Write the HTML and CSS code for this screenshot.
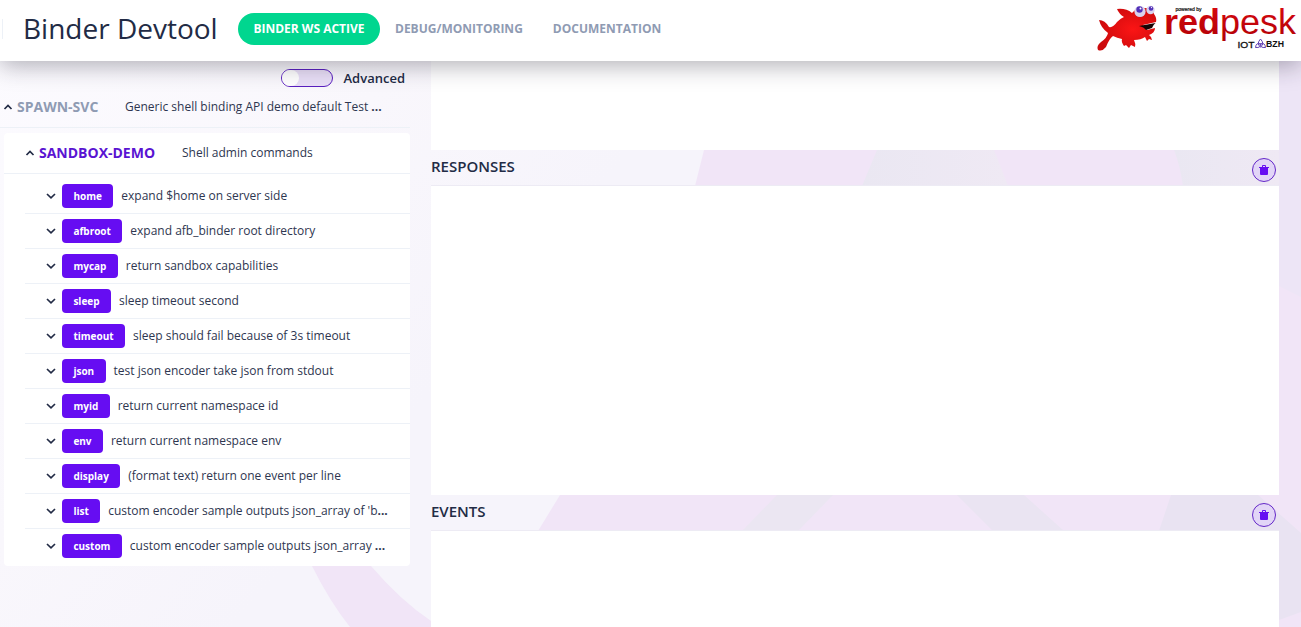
FILE: index.html
```html
<!DOCTYPE html>
<html lang="en">
<head>
<meta charset="utf-8">
<title>Binder Devtool</title>
<link rel="stylesheet" href="styles.css">
</head>
<body>
<svg class="backdrop" viewBox="0 0 1301 627" aria-hidden="true">
  <defs>
    <linearGradient id="base" x1="0" y1="0" x2="1" y2="0.4">
      <stop offset="0" stop-color="#fcfbff"/><stop offset=".3" stop-color="#f9f7fc"/><stop offset=".5" stop-color="#f6f4fb"/>
    </linearGradient>
    <linearGradient id="shade" x1="0" y1="0" x2="1" y2="0">
      <stop offset="0" stop-color="#eae7f2"/><stop offset="1" stop-color="#efe9f4"/>
    </linearGradient>
  </defs>
  <rect width="1301" height="627" fill="url(#base)"/>
  <path d="M740 0Q712 105 704 150L695 186Q650 350 560 495L538 531V627H1301V0Z" fill="#f1e5f7"/>
  <path d="M312 566H371Q400 600 431 621V627H350Q330 602 312 566Z" fill="#f1e5f7"/>
  <path d="M877 150H994Q1000 165 1008 186H862Z" fill="url(#shade)"/>
  <path d="M1174 150H1279V186H1183Q1180 165 1174 150Z" fill="url(#shade)"/>
  <path d="M1279 61H1301V297L1279 286Z" fill="#ede5f6"/>
  <path d="M777 495H833L798 531H742Z" fill="#ebe6f2"/>
  <path d="M957 495H1024L1064 531H993Z" fill="#eae4f2"/>
  <path d="M1171 495H1258L1301 533V612L1279 620V531H1159Z" fill="#e9e3f2"/>
</svg>

<header class="header">
  <span class="divider"></span>
  <h1 class="title">Binder Devtool</h1>
  <nav class="nav">
    <a class="nav-item active">BINDER WS ACTIVE</a>
    <a class="nav-item">DEBUG/MONITORING</a>
    <a class="nav-item">DOCUMENTATION</a>
  </nav>
  <svg class="logo" width="206" height="56" viewBox="1095 0 206 56">
    <defs>
      <linearGradient id="red" x1="0" y1="0" x2="0" y2="1"><stop offset="0" stop-color="#dc0a10"/><stop offset="1" stop-color="#b00006"/></linearGradient>
      <radialGradient id="fish" cx=".6" cy=".5" r=".6"><stop offset="0" stop-color="#fb1515"/><stop offset="1" stop-color="#cc0a0c"/></radialGradient>
    </defs>
    <path d="M1099 20Q1105 20 1109 27Q1113 28 1117 22Q1121 18 1124 17Q1119 14 1117 9Q1126 8 1132 13Q1136 8 1145 8Q1153 8 1154 14Q1157 18 1156 22L1143 25L1147 30L1155 28Q1155 33 1149 35Q1152 37 1152 40L1149 39L1147 41L1145 37Q1141 40 1134 40Q1136 44 1135 47L1131 45L1129 48L1126 45L1124 46Q1121 42 1122 39Q1117 38 1113 36Q1109 39 1106 47Q1102 52 1098 50Q1096 46 1101 42Q1107 38 1108 33Q1101 28 1099 20Z" fill="url(#fish)"/>
    <path d="M1139 26L1155.500 23Q1153 25 1152 28L1146 30Q1144 27 1139 26Z" fill="#180405"/>
    <circle cx="1140" cy="11.500" r="5.600" fill="#d9d2ed"/><circle cx="1150.500" cy="10" r="4.200" fill="#d9d2ed"/>
    <circle cx="1139.500" cy="9.500" r="3.200" fill="#5231b8"/><circle cx="1151" cy="8.500" r="2.300" fill="#5231b8"/>
    <circle cx="1140.500" cy="8.500" r="1" fill="#fff"/><circle cx="1151.500" cy="7.600" r=".7" fill="#fff"/>
    <text x="1175.500" y="11" class="logo-powered" textLength="26" lengthAdjust="spacingAndGlyphs">powered by</text>
    <text x="1164" y="34" class="logo-word" fill="url(#red)" textLength="132" lengthAdjust="spacingAndGlyphs"><tspan class="logo-bold">red</tspan>pesk</text>
    <text x="1237.500" y="48" class="logo-iot" textLength="17" lengthAdjust="spacingAndGlyphs">IOT</text>
    <text x="1266" y="47" class="logo-bzh" textLength="18" lengthAdjust="spacingAndGlyphs">BZH</text>
    <g fill="none" stroke="#6040b4" stroke-width="1"><path d="M1260.500 39Q1265 44 1260.500 47Q1256 44 1260.500 39ZM1255.500 47.500Q1256 42 1261 44Q1261 48 1255.500 47.500ZM1265.500 47.500Q1265 42 1260 44Q1260 48 1265.500 47.500Z"/></g>
  </svg>
</header>

<div class="page">
  <aside class="sidebar">
    <div class="advanced"><span class="toggle"><span class="knob"></span></span>Advanced</div>
    <div class="api"><svg class="chev" viewBox="0 0 10 6"><path d="M1.500 5L5 1.500L8.500 5"/></svg><b class="api-name">SPAWN-SVC</b><span class="desc">Generic shell binding API demo default Test <b>...</b></span></div>
    <section class="card">
      <div class="group"><svg class="chev" viewBox="0 0 10 6"><path d="M1.500 5L5 1.500L8.500 5"/></svg><b class="group-name">SANDBOX-DEMO</b><span class="desc">Shell admin commands</span></div>
      <ul class="verbs">
        <li class="verb"><svg class="chev" viewBox="0 0 10 6"><path d="M1 1L5 4.800L9 1"/></svg><span class="badge">home</span><span class="desc">expand $home on server side</span></li>
        <li class="verb"><svg class="chev" viewBox="0 0 10 6"><path d="M1 1L5 4.800L9 1"/></svg><span class="badge">afbroot</span><span class="desc">expand afb_binder root directory</span></li>
        <li class="verb"><svg class="chev" viewBox="0 0 10 6"><path d="M1 1L5 4.800L9 1"/></svg><span class="badge">mycap</span><span class="desc">return sandbox capabilities</span></li>
        <li class="verb"><svg class="chev" viewBox="0 0 10 6"><path d="M1 1L5 4.800L9 1"/></svg><span class="badge">sleep</span><span class="desc">sleep timeout second</span></li>
        <li class="verb"><svg class="chev" viewBox="0 0 10 6"><path d="M1 1L5 4.800L9 1"/></svg><span class="badge">timeout</span><span class="desc">sleep should fail because of 3s timeout</span></li>
        <li class="verb"><svg class="chev" viewBox="0 0 10 6"><path d="M1 1L5 4.800L9 1"/></svg><span class="badge">json</span><span class="desc">test json encoder take json from stdout</span></li>
        <li class="verb"><svg class="chev" viewBox="0 0 10 6"><path d="M1 1L5 4.800L9 1"/></svg><span class="badge">myid</span><span class="desc">return current namespace id</span></li>
        <li class="verb"><svg class="chev" viewBox="0 0 10 6"><path d="M1 1L5 4.800L9 1"/></svg><span class="badge">env</span><span class="desc">return current namespace env</span></li>
        <li class="verb"><svg class="chev" viewBox="0 0 10 6"><path d="M1 1L5 4.800L9 1"/></svg><span class="badge">display</span><span class="desc">(format text) return one event per line</span></li>
        <li class="verb"><svg class="chev" viewBox="0 0 10 6"><path d="M1 1L5 4.800L9 1"/></svg><span class="badge">list</span><span class="desc">custom encoder sample outputs json_array of 'b<b>...</b></span></li>
        <li class="verb"><svg class="chev" viewBox="0 0 10 6"><path d="M1 1L5 4.800L9 1"/></svg><span class="badge">custom</span><span class="desc">custom encoder sample outputs json_array <b>...</b></span></li>
      </ul>
    </section>
  </aside>
  <main class="main">
    <div class="panel panel-top"></div>
    <div class="panel-head">RESPONSES<button class="clear" aria-label="Clear responses"><svg width="10" height="10" viewBox="0 0 10 10"><path d="M3 2V1Q3 0 4 0H6Q7 0 7 1V2H10V3H9V9Q9 10 8 10H2Q1 10 1 9V3H0V2ZM4 2H6V1H4Z" fill-rule="evenodd"/></svg></button></div>
    <div class="panel panel-responses"></div>
    <div class="panel-head">EVENTS<button class="clear" aria-label="Clear events"><svg width="10" height="10" viewBox="0 0 10 10"><path d="M3 2V1Q3 0 4 0H6Q7 0 7 1V2H10V3H9V9Q9 10 8 10H2Q1 10 1 9V3H0V2ZM4 2H6V1H4Z" fill-rule="evenodd"/></svg></button></div>
    <div class="panel panel-events"></div>
  </main>
</div>
</body>
</html>
```
FILE: styles.css
```css
* { box-sizing: border-box; }
body { margin: 0; height: 627px; overflow: hidden; display: flex; flex-direction: column; font-family: "Open Sans", "Noto Sans", sans-serif; color: #222b45; }
.backdrop { position: absolute; inset: 0; width: 1301px; height: 627px; z-index: -1; }
.header { flex: none; height: 61px; display: flex; align-items: center; background: #fff; box-shadow: 0 4px 24px rgba(30, 28, 45, .36); z-index: 2; padding-bottom: 4px; }
.divider { width: 1px; height: 20px; background: #edf1f7; margin-left: 2px; }
.title { margin: 0 0 0 20px; width: 215px; padding-bottom: 2px; font-size: 28px; font-weight: 400; line-height: 40px; white-space: nowrap; }
.nav { display: flex; align-items: center; }
.nav-item { font-size: 12px; font-weight: 700; line-height: 32px; color: #8f9bb3; margin-right: 30px; white-space: nowrap; }
.nav-item.active { width: 142px; height: 32px; border-radius: 16px; background: #00d68f; color: #fff; text-align: center; margin-right: 15px; }
.logo { margin-left: auto; align-self: flex-start; }
.logo text { font-family: "Liberation Sans", Arial, sans-serif; }
.logo-powered { font-size: 5px; fill: #111; stroke: #111; stroke-width: .2; }
.logo-word { font-size: 35px; }
.logo-bold { font-weight: 700; }
.logo-iot { font-size: 9px; font-weight: 400; fill: #111; stroke: #111; stroke-width: .3; }
.logo-bzh { font-size: 8.5px; font-weight: 700; fill: #111; }
.page { flex: 1; display: flex; gap: 21px; min-height: 0; }
.sidebar { width: 410px; }
.advanced { height: 34px; display: flex; align-items: center; justify-content: flex-end; gap: 11px; padding-right: 5px; font-size: 13px; font-weight: 600; }
.toggle { width: 52px; height: 18px; border: 1px solid #5a1fc0; border-radius: 9px; background: #e9dff7; }
.knob { display: block; width: 17px; height: 16px; border-radius: 8px; background: #fff; }
.chev { width: 10px; height: 6px; flex: none; fill: none; stroke: #222b45; stroke-width: 1.7; }
.api { height: 33px; display: flex; align-items: center; padding: 0 0 8px 3px; border-bottom: 1px solid #edf1f7; margin-bottom: 5px; }
.api-name { width: 108px; margin-left: 4px; padding-bottom: 2px; font-size: 14px; color: #8f9bb3; }
.desc { font-size: 12px; line-height: 20px; white-space: nowrap; color: #2e3650; }
.card { margin-left: 4px; height: 433px; border-radius: 4px; background: #fff; }
.group { height: 41px; display: flex; align-items: center; padding-left: 21px; border-bottom: 1px solid #edf1f7; }
.group-name { width: 143px; margin-left: 4px; padding-bottom: 2px; font-size: 14px; color: #5a14d2; }
.verbs { list-style: none; margin: 0 0 0 21px; padding: 5px 0 0; }
.verb { height: 35px; display: flex; align-items: center; padding-left: 21px; border-bottom: 1px solid #edf1f7; }
.verb:last-child { border-bottom-color: transparent; }
.badge { height: 24px; margin: 0 8px 0 6px; padding: 0 11.4px; border-radius: 4px; background: #660df2; color: #fff; font-size: 10px; font-weight: 700; line-height: 24px; }
.main { width: 848px; display: flex; flex-direction: column; }
.panel { background: #fff; flex: none; }
.panel-top { height: 89px; }
.panel-responses { height: 309px; }
.panel-events { height: 96px; }
.panel-head { flex: none; height: 36px; display: flex; justify-content: space-between; font-size: 15px; font-weight: 600; line-height: 33px; border-bottom: 1px solid #edebf4; }
.clear { width: 24px; height: 24px; margin: 8px 3px 0 0; padding: 0; border: 1px solid #6428c8; border-radius: 50%; background: #e2d5f7; display: grid; place-items: center; }
.clear svg { fill: #660df2; }
```
